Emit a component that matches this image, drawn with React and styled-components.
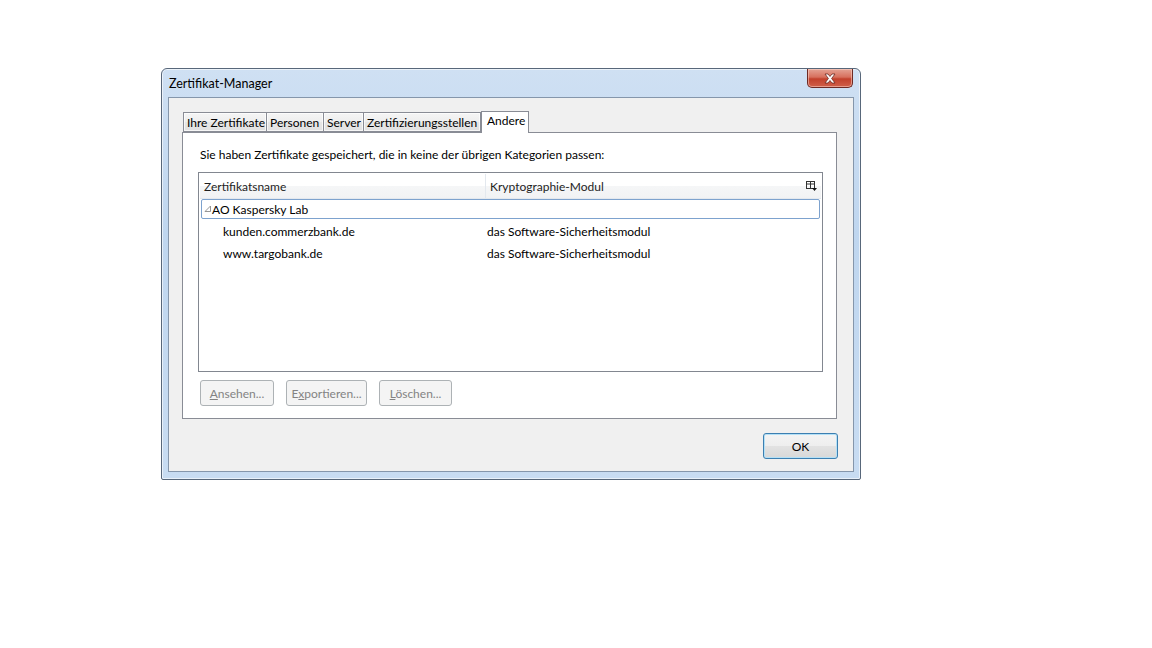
import React from 'react';
import styled, { createGlobalStyle } from 'styled-components';

const GlobalStyle = createGlobalStyle`
  html, body {
    margin: 0;
    background: #ffffff;
  }
  body {
    padding: 68px 0 0 161px;
    font-family: Lato, "Noto Sans", sans-serif;
    font-size: 12px;
    color: #000;
  }
`;

const Window = styled.div`
  width: 700px;
  height: 412px;
  box-sizing: border-box;
  border: 1px solid #58677a;
  border-radius: 6px 6px 2px 2px;
  background: linear-gradient(180deg, #cfe0f3 0%, #bfd6ef 40%, #c8dcf2 100%);
  padding: 0 6px 7px 6px;
  display: flex;
  flex-direction: column;
  box-shadow: inset 0 0 0 1px rgba(255, 255, 255, 0.6);
`;

const TitleBar = styled.div`
  height: 28px;
  display: flex;
  justify-content: space-between;
  align-items: flex-start;
`;

const Title = styled.span`
  margin: 7px 0 0 1px;
  font-size: 12.5px;
  color: #000;
`;

const CloseButton = styled.div`
  width: 46px;
  height: 19px;
  margin-right: 1px;
  box-sizing: border-box;
  border: 1px solid #6d2a24;
  border-top: none;
  border-radius: 0 0 5px 5px;
  background: linear-gradient(180deg, #e4a394 0%, #d7705d 45%, #c2412c 55%, #d0604a 100%);
  display: flex;
  align-items: center;
  justify-content: center;
  box-shadow: inset 0 0 0 1px rgba(255, 220, 210, 0.5);
`;

const Client = styled.div`
  flex: 1;
  box-sizing: border-box;
  border: 1px solid #8596ab;
  background: #f0f0f0;
  padding: 14px 15px 12px 13px;
  display: flex;
  flex-direction: column;
`;

const TabStrip = styled.div`
  display: flex;
  align-items: flex-end;
  height: 20px;
  padding-left: 1px;
  position: relative;
  z-index: 1;
`;

const Tab = styled.div`
  width: ${p => p.$w}px;
  height: ${p => (p.$active ? '22px' : '20px')};
  box-sizing: border-box;
  padding: ${p => (p.$active ? '1px 0 0 5px' : '2px 0 0 3px')};
  margin-left: ${p => (p.$active ? '0' : '-1px')};
  margin-bottom: ${p => (p.$active ? '-1px' : '0')};
  border: 1px solid #898c95;
  border-bottom: ${p => (p.$active ? 'none' : '1px solid #898c95')};
  background: ${p => (p.$active ? '#ffffff' : 'linear-gradient(180deg, #f5f5f5 0%, #eeeeee 50%, #e6e6e6 51%, #e1e1e1 100%)')};
  box-shadow: ${p => (p.$active ? 'none' : 'inset 0 0 0 1px rgba(255, 255, 255, 0.7)')};
  white-space: nowrap;
  &:first-child {
    margin-left: 0;
  }
`;

const Panel = styled.div`
  height: 287px;
  margin-right: 1px;
  box-sizing: border-box;
  border: 1px solid #898c95;
  background: #ffffff;
  padding: 14px 13px 0 15px;
  display: flex;
  flex-direction: column;
`;

const Intro = styled.div`
  height: 16px;
  padding-left: 2px;
  line-height: 16px;
`;

const Tree = styled.div`
  margin-top: 9px;
  height: 200px;
  box-sizing: border-box;
  border: 1px solid #828790;
  background: #fff;
  padding: 1px;
`;

const HeaderRow = styled.div`
  display: grid;
  grid-template-columns: 286px 1fr 20px;
  height: 24px;
  background: linear-gradient(180deg, #ffffff 0%, #ffffff 50%, #f5f6f7 51%, #f1f2f4 100%);
  border-bottom: 1px solid #e3e8ee;
`;

const HeaderCell = styled.div`
  display: flex;
  align-items: center;
  padding-left: 4px;
  border-right: ${p => (p.$divider ? '1px solid #e3e8ee' : 'none')};
  color: #1e1e1e;
`;

const PickerCell = styled.div`
  display: flex;
  align-items: center;
  justify-content: center;
`;

const Row = styled.div`
  display: grid;
  grid-template-columns: 287px 1fr;
  height: ${p => (p.$focus ? '20px' : '22px')};
  align-items: center;
  margin: ${p => (p.$focus ? '0 1px 1px 1px' : '0')};
  box-sizing: border-box;
  border: ${p => (p.$focus ? '1px solid #7da2ce' : 'none')};
  border-radius: 2px;
`;

const Cell = styled.div`
  display: flex;
  align-items: center;
  padding-left: ${p => p.$indent || 0}px;
  white-space: nowrap;
`;

const Twisty = styled.svg`
  width: 8px;
  height: 8px;
`;

const ActionBar = styled.div`
  display: flex;
  gap: 12px;
  margin: 8px 0 0 2px;
`;

const GrayButton = styled.div`
  height: 26px;
  width: ${p => p.$w}px;
  box-sizing: border-box;
  border: 1px solid #adb2b5;
  border-radius: 3px;
  background: #f4f4f4;
  color: #838383;
  display: flex;
  align-items: center;
  justify-content: center;
  u {
    text-decoration: underline;
  }
`;

const Footer = styled.div`
  flex: 1;
  display: flex;
  justify-content: flex-end;
  align-items: flex-end;
`;

const OkButton = styled.div`
  width: 75px;
  height: 26px;
  box-sizing: border-box;
  border: 1px solid #3c7fb1;
  border-radius: 3px;
  background: linear-gradient(180deg, #f4f4f4 0%, #eeeeee 50%, #e2e2e2 51%, #d8d8d8 100%);
  box-shadow: inset 0 0 0 1px #b4e0f6;
  display: flex;
  align-items: center;
  justify-content: center;
  color: #000;
`;

const tabs = [
  { label: 'Ihre Zertifikate', w: 84 },
  { label: 'Personen', w: 58 },
  { label: 'Server', w: 41 },
  { label: 'Zertifizierungsstellen', w: 118 },
];

const certs = [
  { name: 'kunden.commerzbank.de', module: 'das Software-Sicherheitsmodul' },
  { name: 'www.targobank.de', module: 'das Software-Sicherheitsmodul' },
];

export default function App() {
  return (
    <>
      <GlobalStyle />
      <Window>
        <TitleBar>
          <Title>Zertifikat-Manager</Title>
          <CloseButton>
            <svg width="14" height="11" viewBox="0 0 14 11">
              <path
                d="M2 1 L5 1 L7 3.5 L9 1 L12 1 L8.6 5.5 L12 10 L9 10 L7 7.5 L5 10 L2 10 L5.4 5.5 Z"
                fill="#ffffff"
                stroke="#6b2a22"
                strokeWidth="0.8"
              />
            </svg>
          </CloseButton>
        </TitleBar>
        <Client>
          <TabStrip>
            {tabs.map(t => (
              <Tab key={t.label} $w={t.w}>{t.label}</Tab>
            ))}
            <Tab $active $w={48}>Andere</Tab>
          </TabStrip>
          <Panel>
            <Intro>Sie haben Zertifikate gespeichert, die in keine der übrigen Kategorien passen:</Intro>
            <Tree>
              <HeaderRow>
                <HeaderCell $divider>Zertifikatsname</HeaderCell>
                <HeaderCell>Kryptographie-Modul</HeaderCell>
                <PickerCell>
                  <svg width="11" height="10" viewBox="0 0 11 10">
                    <rect x="0.5" y="0.5" width="8" height="7" fill="none" stroke="#333" />
                    <line x1="0.5" y1="3" x2="8.5" y2="3" stroke="#333" />
                    <line x1="4.5" y1="0.5" x2="4.5" y2="7.5" stroke="#333" />
                    <path d="M6 7 L11 7 L8.5 10 Z" fill="#111" />
                  </svg>
                </PickerCell>
              </HeaderRow>
              <Row $focus>
                <Cell $indent={2}>
                  <Twisty viewBox="0 0 8 8">
                    <path d="M1 6.5 L6.5 6.5 L6.5 1 Z" fill="none" stroke="#8a8a8a" strokeWidth="0.9" />
                  </Twisty>
                  AO Kaspersky Lab
                </Cell>
                <Cell />
              </Row>
              {certs.map(c => (
                <Row key={c.name}>
                  <Cell $indent={23}>{c.name}</Cell>
                  <Cell>{c.module}</Cell>
                </Row>
              ))}
            </Tree>
            <ActionBar>
              <GrayButton $w={74}>
                <span><u>A</u>nsehen...</span>
              </GrayButton>
              <GrayButton $w={81}>
                <span>E<u>x</u>portieren...</span>
              </GrayButton>
              <GrayButton $w={73}>
                <span><u>L</u>öschen...</span>
              </GrayButton>
            </ActionBar>
          </Panel>
          <Footer>
            <OkButton>OK</OkButton>
          </Footer>
        </Client>
      </Window>
    </>
  );
}
